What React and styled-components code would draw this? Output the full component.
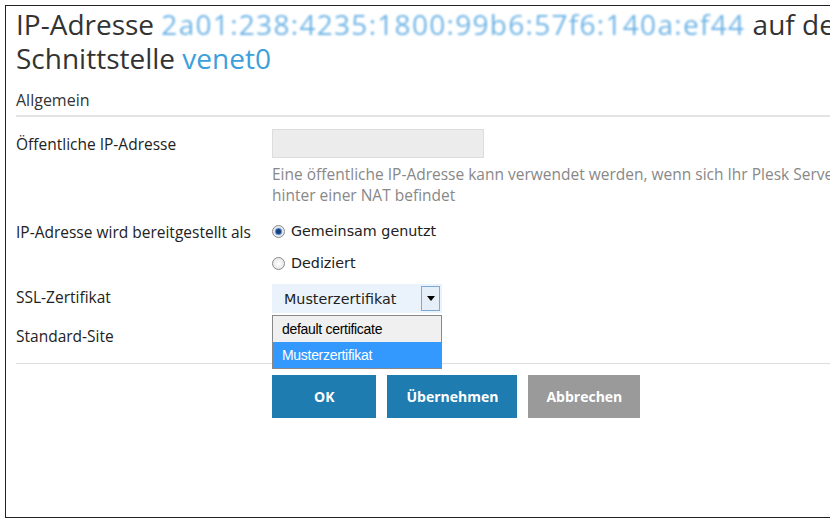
import React from "react";
import styled, { createGlobalStyle } from "styled-components";

const G = createGlobalStyle`
  body{margin:0;background:#fff;font-family:"Open Sans",sans-serif;}
`;
const Frame = styled.div`
  position:relative;margin:5px 0 0 5px;width:825px;height:513px;box-sizing:border-box;
  border:1px solid #222;border-right:none;overflow:hidden;padding:0 0 0 10px;
`;
const Title = styled.h1`
  margin:1px 0 0;font-weight:400;font-size:28px;line-height:34px;color:#333;white-space:nowrap;
`;
const Link = styled.span`color:#3ca0dc;`;
const Blur = styled.span`color:#6fb4e6;filter:blur(1.2px);letter-spacing:1.3px;`;
const Section = styled.div`
  margin-top:14px;font-size:16px;color:#333;padding-bottom:4px;border-bottom:2px solid #e4e4e4;
`;
const Row = styled.div`display:grid;grid-template-columns:256px 1fr;margin-top:${p=>p.mt}px;font-size:15.5px;color:#222;`;
const Label = styled.div`padding-top:${p=>p.pt||0}px;`;
const Input = styled.div`width:212px;height:29px;background:#ececec;border:1px solid #ddd;box-sizing:border-box;`;
const Help = styled.div`margin-top:6px;color:#888;line-height:21px;white-space:nowrap;`;
const Radio = styled.div`display:flex;align-items:center;gap:6px;height:20px;margin-bottom:${p=>p.mb||0}px;font-family:"DejaVu Sans",sans-serif;font-size:14.3px;`;
const Circle = styled.span`width:13px;height:13px;border-radius:50%;border:1px solid #8a8a8a;box-sizing:border-box;
  background:radial-gradient(circle,#fff 0,#e0e0e0 100%);display:flex;align-items:center;justify-content:center;
  &::after{content:"";width:5px;height:5px;border-radius:50%;background:${p=>p.on?"#1c3f7a":"transparent"};box-shadow:${p=>p.on?"0 0 1px 1px #3b7ad6":"none"};}
`;
const SelWrap = styled.div`position:relative;width:170px;`;
const Select = styled.div`height:29px;background:#eaf3fb;display:flex;align-items:center;justify-content:space-between;padding-left:12px;box-sizing:border-box;font-family:"DejaVu Sans",sans-serif;font-size:14.3px;`;
const Arrow = styled.span`width:19px;height:25px;margin-right:2px;border:1px solid #7aa9d6;background:#e6eef8;box-sizing:border-box;display:flex;align-items:center;justify-content:center;
  &::after{content:"";border-left:4px solid transparent;border-right:4px solid transparent;border-top:5px solid #000;}`;
const Menu = styled.div`position:absolute;left:0;top:31px;width:170px;border:1px solid #888;box-sizing:border-box;background:#fff;font-family:"Liberation Sans",sans-serif;font-size:14px;letter-spacing:-0.3px;`;
const Opt = styled.div`height:26px;line-height:26px;padding-left:9px;background:${p=>p.sel?"#3399ff":"#f0f0f0"};color:${p=>p.sel?"#fff":"#000"};`;
const Sep = styled.div`margin-top:16px;border-top:1px solid #ddd;`;
const Buttons = styled.div`display:flex;gap:11px;margin:11px 0 0 256px;`;
const Btn = styled.div`height:43px;padding:0 ${p=>p.px}px;display:flex;align-items:center;color:#fff;font-weight:700;font-size:14px;background:${p=>p.bg};`;

export default function App(){
  return <><G/><Frame>
    <Title>IP-Adresse <Blur>2a01:238:4235:1800:99b6:57f6:140a:ef44</Blur> auf der<br/>Schnittstelle <Link>venet0</Link></Title>
    <Section>Allgemein</Section>
    <Row mt={12}><Label pt={4}>Öffentliche IP-Adresse</Label><div><Input/><Help>Eine öffentliche IP-Adresse kann verwendet werden, wenn sich Ihr Plesk Server<br/>hinter einer NAT befindet</Help></div></Row>
    <Row mt={15}><Label>IP-Adresse wird bereitgestellt als</Label><div>
      <Radio mb={12}><Circle on/>Gemeinsam genutzt</Radio>
      <Radio><Circle/>Dediziert</Radio></div></Row>
    <Row mt={11}><Label pt={2}>SSL-Zertifikat</Label><SelWrap><Select>Musterzertifikat<Arrow/></Select>
      <Menu><Opt>default certificate</Opt><Opt sel>Musterzertifikat</Opt></Menu></SelWrap></Row>
    <Row mt={12}><Label>Standard-Site</Label><div/></Row>
    <Sep/>
    <Buttons><Btn bg="#1e7cb0" px={42}>OK</Btn><Btn bg="#1e7cb0" px={19}>Übernehmen</Btn><Btn bg="#9a9a9a" px={18}>Abbrechen</Btn></Buttons>
  </Frame></>;
}
